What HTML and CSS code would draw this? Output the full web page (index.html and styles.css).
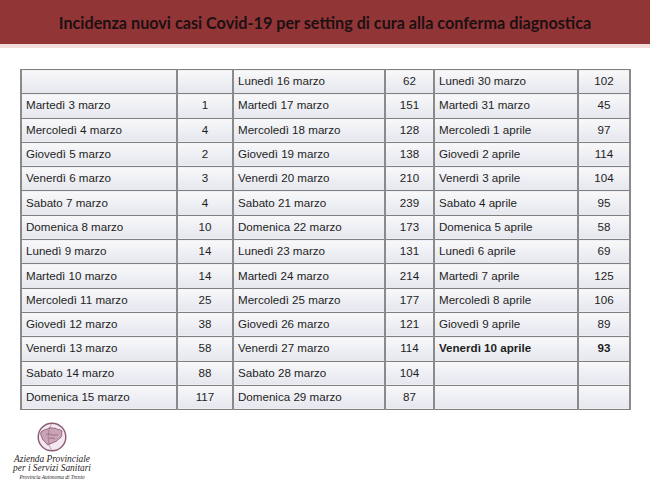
FILE: index.html
```html
<!DOCTYPE html>
<html lang="it">
<head>
<meta charset="utf-8">
<title>Incidenza nuovi casi Covid-19</title>
<link rel="stylesheet" href="styles.css">
</head>
<body>
<header class="band">
  <h1 class="title">Incidenza nuovi casi Covid-19 per setting di cura alla conferma diagnostica</h1>
</header>
<main class="content">
  <table class="grid">
    <colgroup>
      <col class="c1"><col class="c2"><col class="c3"><col class="c4"><col class="c5"><col class="c6">
    </colgroup>
    <tbody>
      <tr><td></td><td class="n"></td><td>Lunedì 16 marzo</td><td class="n">62</td><td>Lunedì 30 marzo</td><td class="n">102</td></tr>
      <tr><td>Martedì 3 marzo</td><td class="n">1</td><td>Martedì 17 marzo</td><td class="n">151</td><td>Martedì 31 marzo</td><td class="n">45</td></tr>
      <tr><td>Mercoledì 4 marzo</td><td class="n">4</td><td>Mercoledì 18 marzo</td><td class="n">128</td><td>Mercoledì 1 aprile</td><td class="n">97</td></tr>
      <tr><td>Giovedì 5 marzo</td><td class="n">2</td><td>Giovedì 19 marzo</td><td class="n">138</td><td>Giovedì 2 aprile</td><td class="n">114</td></tr>
      <tr><td>Venerdì 6 marzo</td><td class="n">3</td><td>Venerdì 20 marzo</td><td class="n">210</td><td>Venerdì 3 aprile</td><td class="n">104</td></tr>
      <tr><td>Sabato 7 marzo</td><td class="n">4</td><td>Sabato 21 marzo</td><td class="n">239</td><td>Sabato 4 aprile</td><td class="n">95</td></tr>
      <tr><td>Domenica 8 marzo</td><td class="n">10</td><td>Domenica 22 marzo</td><td class="n">173</td><td>Domenica 5 aprile</td><td class="n">58</td></tr>
      <tr><td>Lunedì 9 marzo</td><td class="n">14</td><td>Lunedì 23 marzo</td><td class="n">131</td><td>Lunedì 6 aprile</td><td class="n">69</td></tr>
      <tr><td>Martedì 10 marzo</td><td class="n">14</td><td>Martedì 24 marzo</td><td class="n">214</td><td>Martedì 7 aprile</td><td class="n">125</td></tr>
      <tr><td>Mercoledì 11 marzo</td><td class="n">25</td><td>Mercoledì 25 marzo</td><td class="n">177</td><td>Mercoledì 8 aprile</td><td class="n">106</td></tr>
      <tr><td>Giovedì 12 marzo</td><td class="n">38</td><td>Giovedì 26 marzo</td><td class="n">121</td><td>Giovedì 9 aprile</td><td class="n">89</td></tr>
      <tr><td>Venerdì 13 marzo</td><td class="n">58</td><td>Venerdì 27 marzo</td><td class="n">114</td><td class="b">Venerdì 10 aprile</td><td class="n b">93</td></tr>
      <tr><td>Sabato 14 marzo</td><td class="n">88</td><td>Sabato 28 marzo</td><td class="n">104</td><td></td><td class="n"></td></tr>
      <tr><td>Domenica 15 marzo</td><td class="n">117</td><td>Domenica 29 marzo</td><td class="n">87</td><td></td><td class="n"></td></tr>
    </tbody>
  </table>
  <div class="logo">
    <svg class="emblem" width="30" height="30" viewBox="0 0 30 30" aria-hidden="true">
      <circle cx="15" cy="15" r="13.8" fill="#f4e9ee" stroke="#8d5a76" stroke-width="1.4"/>
      <path d="M4 10 C7 7 10 8 12 6 C14 5 16 7 18 6 C20 8 23 7 25 9 C24 12 26 14 23 16 C21 17 20 20 17 20 C15 22 13 21 11 23 C9 22 8 19 6 18 C5 15 3 13 4 10 Z" fill="#c9a3b6" stroke="#8d5a76" stroke-width="0.9"/>
      <path d="M9 12 C11 13 13 11 15 13 C17 14 19 12 21 13" fill="none" stroke="#8d5a76" stroke-width="0.7"/>
      <path d="M12 16 C14 17 16 15 18 17" fill="none" stroke="#8d5a76" stroke-width="0.7"/>
      <path d="M15 1.2 C10 8 10 22 15 28.8" fill="none" stroke="#8d5a76" stroke-width="0.5"/>
    </svg>
    <div class="l1">Azienda Provinciale</div>
    <div class="l2">per i Servizi Sanitari</div>
    <div class="l3">Provincia Autonoma di Trento</div>
  </div>
</main>
</body>
</html>
```
FILE: styles.css
```css
html, body {
  margin: 0;
  padding: 0;
  background: #ffffff;
}
body {
  width: 650px;
  height: 490px;
  overflow: hidden;
  font-family: "Liberation Sans", Arial, sans-serif;
}
.band {
  height: 44px;
  background: #923537;
  border-bottom: 4px solid #f3dcdc;
  display: flex;
  align-items: center;
  justify-content: center;
}
.title {
  margin: 0;
  font-family: Lato, "Open Sans", sans-serif;
  font-weight: bold;
  font-size: 16.2px;
  color: #1d1012;
}
.content {
  padding-top: 21px;
}
.grid {
  margin-left: 20px;
  border-collapse: collapse;
  table-layout: fixed;
  width: 609px;
  font-size: 11.6px;
  color: #1e1e1e;
}
.c1 { width: 156px; }
.c2 { width: 56px; }
.c3 { width: 152px; }
.c4 { width: 49px; }
.c5 { width: 144px; }
.c6 { width: 52px; }
.grid tr {
  height: 24.3px;
}
.grid td {
  border-top: 1px solid #7f7f7f;
  border-bottom: 1px solid #7f7f7f;
  border-left: 2px solid #8a8a8a;
  border-right: 2px solid #8a8a8a;
  background: linear-gradient(#f8f8fa, #e5e7ee);
  padding: 0 0 2px 4px;
  vertical-align: middle;
  white-space: nowrap;
}
.grid td.n {
  text-align: center;
  padding-left: 0;
}
.grid td.b {
  font-weight: bold;
}
.logo {
  margin: 12px 0 0 12px;
  width: 80px;
  display: flex;
  flex-direction: column;
  align-items: center;
  font-family: "Liberation Serif", "Times New Roman", serif;
  font-style: italic;
  color: #2a2326;
}
.emblem {
  display: block;
  margin-bottom: 3px;
}
.l1, .l2 {
  font-size: 9.4px;
  line-height: 9px;
  white-space: nowrap;
}
.l3 {
  font-size: 5.4px;
  line-height: 8px;
  white-space: nowrap;
}
```
